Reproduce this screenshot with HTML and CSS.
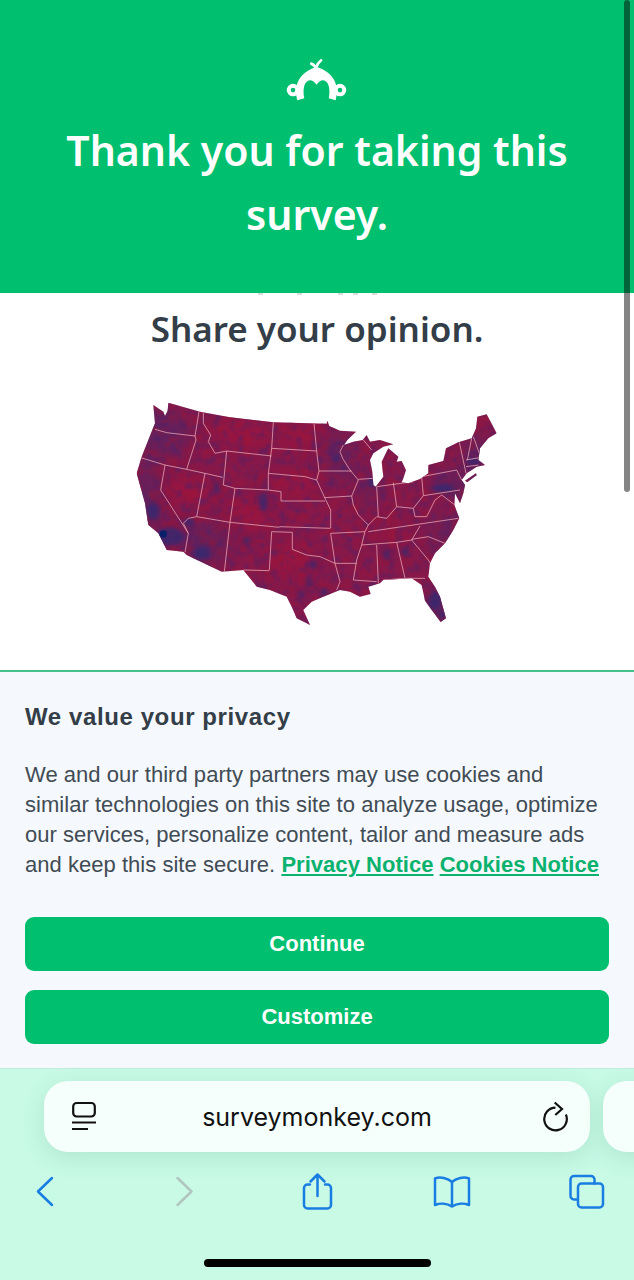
FILE: index.html
```html
<!DOCTYPE html>
<html lang="en">
<head>
<meta charset="utf-8">
<title>Thank you for taking this survey.</title>
<link rel="stylesheet" href="styles.css">
</head>
<body>
<div class="page">
  <header class="hero">
    <svg class="logo" viewBox="140 55 190 130" aria-hidden="true">
      <path class="logo-fill" d="M174 183C162 135 180 98 232 82C284 98 302 135 290 183L269 177C275 148 268 123 252 122C244 122 237 127 232 136C227 127 220 122 212 122C196 123 189 148 195 177Z"/>
      <path class="logo-tuft" d="M230 86C233 76 238 68 246 62M230 84C226 78 222 74 216 72"/>
      <circle class="logo-ear" cx="161" cy="152" r="13"/>
      <circle class="logo-ear" cx="303" cy="152" r="13"/>
    </svg>
    <h1 class="hero-title">Thank you for taking this survey.</h1>
  </header>

  <main class="content">
    <div class="peek"><span></span><span></span><span></span><span></span><span></span></div>
    <h2 class="content-title">Share your opinion.</h2>
    <svg class="map" viewBox="0 0 1170 735" role="img" aria-label="Map of the United States">
      <defs>
        <clipPath id="us">
          <path d="M145 38L240 65L330 82L460 97L620 101L622 92L628 108L660 122L708 125L682 150L672 165L700 155L728 150L740 135L750 155L780 150L820 163L790 170L760 190L750 210L757 245L760 285L767 290L790 260L785 215L805 175L835 200L830 215L845 213L858 240L850 265L845 277L865 280L900 267L925 250L925 225L970 213L978 175L1015 157L1055 145L1068 115L1072 80L1100 73L1130 130L1105 145L1080 175L1075 210L1095 225L1070 230L1040 250L1025 270L1035 285L1030 310L1020 340L1005 310L1003 345L1018 385L1000 420L975 460L945 490L930 520L925 560L945 590L960 620L978 685L962 696L935 660L915 632L905 585L875 565L790 570L780 580L745 590L752 612L720 620L690 605L660 600L610 620L575 635L550 660L570 705L530 685L515 650L500 620L450 600L410 590L370 540L305 545L200 495L190 485L140 480L115 430L85 405L75 340L50 250L65 200L105 100L100 45L130 65L135 78L143 62ZM1035 272L1068 250L1070 256L1042 276Z"/>
        </clipPath>
        <filter id="soft" x="-20%" y="-20%" width="140%" height="140%" color-interpolation-filters="sRGB"><feGaussianBlur stdDeviation="22"/></filter>
        <filter id="softer" x="-20%" y="-20%" width="140%" height="140%" color-interpolation-filters="sRGB"><feGaussianBlur stdDeviation="7"/></filter>
        <filter id="mottle-blue" x="0" y="0" width="100%" height="100%" color-interpolation-filters="sRGB">
          <feTurbulence type="fractalNoise" baseFrequency=".04" numOctaves="3" seed="5"/>
          <feColorMatrix values="0 0 0 0 .27  0 0 0 0 .13  0 0 0 0 .42  1.2 0 0 0 -.5"/>
        </filter>
        <filter id="mottle-red" x="0" y="0" width="100%" height="100%" color-interpolation-filters="sRGB">
          <feTurbulence type="fractalNoise" baseFrequency=".03" numOctaves="3" seed="11"/>
          <feColorMatrix values="0 0 0 0 .62  0 0 0 0 .08  0 0 0 0 .2  1.2 0 0 0 -.5"/>
        </filter>
      </defs>
      <g clip-path="url(#us)">
        <rect class="map-base" width="1170" height="735"/>
        <g class="map-red" filter="url(#soft)">
          <ellipse cx="370" cy="130" rx="90" ry="35"/>
          <ellipse cx="520" cy="280" rx="70" ry="30"/>
          <ellipse cx="200" cy="300" rx="60" ry="40"/>
          <ellipse cx="390" cy="370" rx="70" ry="40"/>
          <ellipse cx="510" cy="510" rx="60" ry="50"/>
          <ellipse cx="530" cy="140" rx="60" ry="30"/>
          <ellipse cx="800" cy="420" rx="60" ry="20"/>
        </g>
        <g class="map-purple" filter="url(#soft)">
          <ellipse cx="130" cy="130" rx="80" ry="70"/>
          <ellipse cx="80" cy="320" rx="35" ry="120"/>
          <ellipse cx="260" cy="460" rx="70" ry="60"/>
          <ellipse cx="660" cy="200" rx="50" ry="70"/>
          <ellipse cx="1000" cy="280" rx="70" ry="40"/>
          <ellipse cx="1070" cy="190" rx="50" ry="50"/>
          <ellipse cx="950" cy="660" rx="30" ry="60"/>
          <ellipse cx="960" cy="420" rx="40" ry="50"/>
          <ellipse cx="750" cy="300" rx="30" ry="50"/>
        </g>
        <rect width="1170" height="735" filter="url(#mottle-blue)"/>
        <rect width="1170" height="735" filter="url(#mottle-red)"/>
        <g class="map-blue" filter="url(#softer)">
          <ellipse cx="150" cy="440" rx="46" ry="28"/>
          <ellipse cx="100" cy="365" rx="20" ry="26"/>
          <ellipse cx="245" cy="490" rx="26" ry="22"/>
          <ellipse cx="205" cy="395" rx="16" ry="12"/>
          <ellipse cx="430" cy="335" rx="14" ry="28"/>
          <ellipse cx="290" cy="295" rx="7" ry="20"/>
          <ellipse cx="580" cy="525" rx="14" ry="11"/>
          <ellipse cx="612" cy="605" rx="10" ry="12"/>
          <ellipse cx="545" cy="612" rx="8" ry="9"/>
          <ellipse cx="568" cy="575" rx="6" ry="16"/>
          <ellipse cx="755" cy="278" rx="10" ry="14"/>
          <ellipse cx="945" cy="630" rx="20" ry="28"/>
          <ellipse cx="965" cy="675" rx="10" ry="16"/>
          <ellipse cx="970" cy="295" rx="36" ry="12"/>
          <ellipse cx="1060" cy="215" rx="22" ry="10"/>
          <ellipse cx="855" cy="485" rx="10" ry="10"/>
          <ellipse cx="800" cy="495" rx="8" ry="14"/>
          <ellipse cx="650" cy="205" rx="8" ry="12"/>
          <ellipse cx="380" cy="450" rx="12" ry="10"/>
        </g>
        <ellipse class="map-navy" cx="130" cy="432" rx="11" ry="11"/>
        <g class="map-lines">
          <path d="M105 118L140 128L225 138"/>
          <path d="M237 65L225 138L228 150L200 238"/>
          <path d="M62 203L135 225L200 238L255 250L308 262"/>
          <path d="M250 68L250 100L272 135L265 155L285 190L320 183L455 198"/>
          <path d="M320 183L310 285L345 295L445 300L483 305L483 333"/>
          <path d="M255 250L230 380L330 397L478 412"/>
          <path d="M135 225L122 300L205 430L195 487"/>
          <path d="M230 380L205 385L190 400L205 430"/>
          <path d="M345 295L330 397L313 545"/>
          <path d="M460 97L455 175L445 250L445 300"/>
          <path d="M455 175L590 183"/>
          <path d="M582 100L590 183L597 243L590 270"/>
          <path d="M445 250L555 260L590 270L615 325L632 360L632 415"/>
          <path d="M483 333L615 333"/>
          <path d="M597 243L695 243"/>
          <path d="M613 323L695 318"/>
          <path d="M670 165L660 185L668 205L690 240L715 270L695 318L700 345L715 375L745 405L735 425L725 465L710 510L700 570"/>
          <path d="M478 410L630 415"/>
          <path d="M455 425L448 540"/>
          <path d="M370 540L448 542"/>
          <path d="M455 425L517 427L517 478L560 495L600 500L645 520L660 575L650 600"/>
          <path d="M632 430L645 520L710 520"/>
          <path d="M632 430L735 425"/>
          <path d="M700 570L770 575"/>
          <path d="M770 465L775 580"/>
          <path d="M725 465L830 457L875 450L900 408"/>
          <path d="M830 457L855 565"/>
          <path d="M790 570L855 565L915 565"/>
          <path d="M875 450L925 510L930 520"/>
          <path d="M875 448L925 440L975 460"/>
          <path d="M745 425L1015 385"/>
          <path d="M745 405L770 380L800 385L830 350L880 355L885 380L920 380L945 330L965 315L1005 345"/>
          <path d="M715 268L760 265"/>
          <path d="M770 290L775 380"/>
          <path d="M770 290L880 275"/>
          <path d="M820 278L830 350"/>
          <path d="M905 260L910 317L880 355"/>
          <path d="M905 260L1010 240L1025 270"/>
          <path d="M910 317L1020 300"/>
          <path d="M1018 157L1038 250"/>
          <path d="M1055 145L1042 210"/>
          <path d="M1060 140L1078 190"/>
          <path d="M1038 210L1078 203"/>
          <path d="M1038 230L1075 225"/>
          <path d="M730 150L755 180"/>
        </g>
      </g>
    </svg>
  </main>

  <section class="consent">
    <h3 class="consent-title">We value your privacy</h3>
    <p class="consent-text">We and our third party partners may use cookies and similar technologies on this site to analyze usage, optimize our services, personalize content, tailor and measure ads and keep this site secure. <a href="#">Privacy Notice</a> <a href="#">Cookies Notice</a></p>
    <div class="consent-actions">
      <button class="btn" type="button">Continue</button>
      <button class="btn" type="button">Customize</button>
    </div>
  </section>

  <footer class="browser">
    <div class="tabs">
      <div class="pill">
        <svg class="pill-icon" viewBox="0 0 26 32" aria-hidden="true">
          <rect x="2.2" y="2" width="21.6" height="13.5" rx="3.5"/>
          <path d="M1 21.5H25M1 28H17"/>
        </svg>
        <span class="url">surveymonkey.com</span>
        <svg class="pill-icon" viewBox="0 0 26 32" aria-hidden="true">
          <path d="M12.5 6.7A11.3 11.3 0 1 0 22.9 13.5"/>
          <path d="M11.7 1.5L19 8L12.3 14"/>
        </svg>
      </div>
      <div class="pill pill-next"></div>
    </div>
    <nav class="toolbar">
      <svg class="tool" viewBox="0 0 40 40" aria-hidden="true"><path d="M27 6L13 19.5L27 33"/></svg>
      <svg class="tool tool-off" viewBox="0 0 40 40" aria-hidden="true"><path d="M16.500 6L30.500 19.500L16.500 33"/></svg>
      <svg class="tool" viewBox="0 0 40 40" aria-hidden="true"><path d="M14 12.500H11.500A3.500 3.500 0 0 0 8 16V33A3.500 3.500 0 0 0 11.500 36.500H31.500A3.500 3.500 0 0 0 35 33V16A3.500 3.500 0 0 0 31.500 12.500H29M21.500 24V3M14.500 9.500L21.500 2.500L28.500 9.500"/></svg>
      <svg class="tool" viewBox="0 0 40 40" aria-hidden="true"><path d="M20 10C16 6 8 4.500 3 6.500V33C8 31 15 31 20 34.500C25 31 32 31 37 33V6.500C32 4.500 24 6 20 10ZM20 10V34"/></svg>
      <svg class="tool" viewBox="0 0 40 40" aria-hidden="true"><path d="M10.500 27.500H7A3.500 3.500 0 0 1 3.500 24V7.500A3.500 3.500 0 0 1 7 4H24A3.500 3.500 0 0 1 27.500 7.500V11.500"/><rect x="11" y="11.500" width="25" height="24" rx="3.500"/></svg>
    </nav>
    <div class="home-bar"></div>
  </footer>

  <div class="scrollbar"></div>
</div>
</body>
</html>
```

FILE: styles.css
```css
* { box-sizing: border-box; }
html, body { margin: 0; padding: 0; }
body { background: #fff; }

.page {
  position: relative;
  width: 634px;
  height: 1280px;
  overflow: hidden;
  display: flex;
  flex-direction: column;
  font-family: "Liberation Sans", Arial, sans-serif;
}

/* Hero */
.hero {
  height: 293px;
  flex: none;
  background: #00bf6f;
  color: #fff;
  display: flex;
  flex-direction: column;
  align-items: center;
  padding-top: 58px;
}
.logo { width: 63px; height: 43px; display: block; }
.logo-fill { fill: #fff; }
.logo-tuft { fill: none; stroke: #fff; stroke-width: 8; stroke-linecap: round; }
.logo-ear { fill: #00bf6f; stroke: #fff; stroke-width: 12; }
.hero-title {
  margin: 17px 0 0;
  width: 520px;
  text-align: center;
  font-family: "Noto Sans", sans-serif;
  font-size: 41px;
  font-weight: 600;
  line-height: 64px;
}

/* Main content */
.content {
  height: 377px;
  flex: none;
  background: #fff;
  display: flex;
  flex-direction: column;
  align-items: center;
}
.peek { width: 119px; height: 2px; display: flex; flex: none; margin-bottom: 1px; }
.peek span { width: 5px; height: 2px; background: #d5dcdc; }
.peek span:nth-child(2) { margin-left: 34px; }
.peek span:nth-child(3) { margin-left: 36px; }
.peek span:nth-child(4) { margin-left: 10px; }
.peek span:nth-child(5) { margin-left: 14px; }
.content-title {
  margin: 8px 0 0;
  color: #333e48;
  font-family: "Noto Sans", sans-serif;
  font-size: 35px;
  font-weight: 600;
  line-height: 50px;
}
.map { width: 390px; height: 245px; margin: 36px 4px 0 0; display: block; flex: none; }
.map-base { fill: #86184a; }
.map-red { fill: #a3143c; opacity: .7; }
.map-purple { fill: #4e2769; opacity: .6; }
.map-blue { fill: #2f2a75; opacity: .75; }
.map-navy { fill: #0c1f6a; }
.map-lines { fill: none; stroke: #eba9b6; stroke-width: 2.3; stroke-linejoin: round; }

/* Consent */
.consent {
  height: 398px;
  flex: none;
  background: #f5f8fc;
  border-top: 2px solid #45c28c;
  padding: 30px 25px 0;
  color: #414c55;
}
.consent-title { margin: 0; color: #333e48; font-size: 24px; font-weight: 700; line-height: 30px; letter-spacing: .6px; }
.consent-text { margin: 28px 0 0; font-size: 22px; line-height: 30px; letter-spacing: .03px; }
.consent-text a { color: #0bb26e; font-weight: 700; text-decoration: underline; }
.consent-actions { margin-top: 37px; display: flex; flex-direction: column; gap: 19px; }
.btn {
  height: 54px;
  border: 0;
  border-radius: 9px;
  background: #00bf6f;
  color: #fff;
  font-family: inherit;
  font-size: 22px;
  font-weight: 700;
}

/* Browser chrome */
.browser {
  flex: 1;
  background: #c8fae6;
  border-top: 1px solid #bdeedb;
  padding-top: 12px;
  display: flex;
  flex-direction: column;
}
.tabs { display: flex; gap: 13px; padding-left: 44px; }
.pill {
  width: 546px;
  height: 71px;
  flex: none;
  border-radius: 24px;
  background: #f5fffb;
  box-shadow: 0 6px 22px rgba(50, 130, 100, .16);
  display: flex;
  align-items: center;
  justify-content: space-between;
  padding: 0 21px 0 27px;
}
.pill-icon { width: 26px; height: 32px; fill: none; stroke: #111; stroke-width: 2.2; flex: none; }
.url { font-family: Inter, sans-serif; font-size: 25px; color: #111; margin-right: 6px; }
.toolbar {
  margin-top: 20px;
  height: 40px;
  padding: 0 27px 0 25px;
  display: flex;
  justify-content: space-between;
}
.tool { width: 40px; height: 40px; fill: none; stroke: #1a7de2; stroke-width: 2.5; stroke-linecap: round; stroke-linejoin: round; }
.tool-off { stroke: #b0c6bf; }
.home-bar { width: 227px; height: 8px; margin: 47px 0 0 204px; border-radius: 4px; background: #000; }

.scrollbar {
  position: absolute;
  top: 0;
  left: 624px;
  width: 6px;
  height: 492px;
  border-radius: 3px;
  background: rgba(0, 0, 0, .48);
}
```
